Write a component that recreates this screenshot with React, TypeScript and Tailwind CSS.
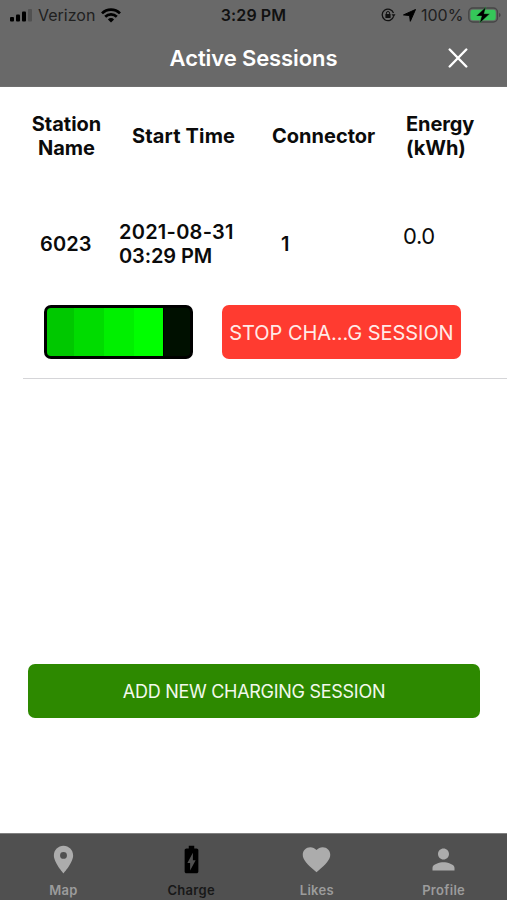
import { MdBatteryChargingFull, MdFavorite, MdLocationOn, MdPerson } from "react-icons/md";

const tabs = [
  { label: "Map", Icon: MdLocationOn, active: false },
  { label: "Charge", Icon: MdBatteryChargingFull, active: true },
  { label: "Likes", Icon: MdFavorite, active: false },
  { label: "Profile", Icon: MdPerson, active: false },
];

function SignalIcon() {
  return (
    <svg width="23" height="13" viewBox="0 0 23 13">
      <rect x="0" y="8" width="4" height="4.5" rx="1" />
      <rect x="6" y="5.5" width="4" height="7" rx="1" />
      <rect x="12" y="2.5" width="4" height="10" rx="1" />
      <rect x="18" y="0" width="4" height="12.5" rx="1" fill="#515151" />
    </svg>
  );
}

function WifiIcon() {
  return (
    <svg width="20" height="15" viewBox="0 0 20 15" fill="none" stroke="#000" strokeWidth="2.7">
      <path d="M1 5.4a12.7 12.7 0 0 1 18 0" />
      <path d="M4.2 8.7a8.2 8.2 0 0 1 11.6 0" />
      <path d="M10 14.5 6.9 11.4a4.4 4.4 0 0 1 6.2 0z" fill="#000" stroke="none" />
    </svg>
  );
}

function RotationLockIcon() {
  return (
    <svg width="15" height="14" viewBox="0 0 15 14" fill="none" stroke="#111" strokeWidth="1.3">
      <path d="M12.6 8.4A5.8 5.8 0 1 1 12.5 5" />
      <path d="M10.5 6.3h4L12.7 9z" fill="#111" stroke="none" />
      <rect x="4.4" y="6" width="5.2" height="4" rx=".6" fill="#111" stroke="none" />
      <path d="M5.4 6.4V5.1a1.6 1.6 0 0 1 3.2 0v1.3" strokeWidth="1" />
    </svg>
  );
}

function BatteryIcon() {
  return (
    <svg width="34" height="18" viewBox="0 0 34 18">
      <rect x=".8" y="2" width="28.6" height="14" rx="4" fill="none" stroke="#464646" strokeWidth="1.4" />
      <rect x="2.5" y="3.7" width="25.2" height="10.6" rx="2.3" fill="#35c759" />
      <path d="M31 7v4.2c1-.3 1.6-1 1.6-2.1S32 7.3 31 7z" fill="#464646" />
      <path d="M18 .8 8.2 10h5.4l-2 7.2 10.3-9.500h-5.800z" stroke="#35c759" strokeWidth=".4" />
    </svg>
  );
}

export default function App() {
  return (
    <div className="flex h-[900px] w-[507px] flex-col overflow-hidden bg-white font-['Inter',sans-serif] text-[#0b0b0b]">
      <header className="h-[87px] shrink-0 border-b border-[#707070] bg-[#696969]">
        <div className="grid h-[30px] grid-cols-[1fr_auto_1fr] items-center text-[16px]">
          <div className="flex items-center pl-[10px]">
            <SignalIcon />
            <span className="ml-[5px] w-[58px] text-[16px] text-[#202020]">Verizon</span>
            <span className="ml-[5px]"><WifiIcon /></span>
          </div>
          <span className="text-[16px] font-semibold tracking-[0.1px] text-[#111]">3:29 PM</span>
          <div className="flex items-center justify-end pr-[5px]">
            <RotationLockIcon />
            <svg className="ml-[7px]" width="13" height="13" viewBox="0 0 13 13">
              <path d="M12.5.5 7.3 12.3 6.6 6.5.5 5.9z" stroke="#000" strokeLinejoin="round" />
            </svg>
            <span className="ml-[5px] w-[43px] text-[16px] text-[#202020]">100%</span>
            <span className="ml-[4px]"><BatteryIcon /></span>
          </div>
        </div>
        <div className="grid h-[56px] grid-cols-[1fr_auto_1fr] items-center text-white">
          <span />
          <h1 className="text-[22px] font-semibold tracking-[-0.1px]">Active Sessions</h1>
          <button className="mr-[39px] justify-self-end" aria-label="Close">
            <svg width="20" height="20" viewBox="0 0 20 20" stroke="#fff" strokeWidth="2.4" strokeLinecap="round">
              <path d="m1.7 1.5 16.6 17M18.3 1.5 1.7 18.5" />
            </svg>
          </button>
        </div>
      </header>

      <main className="flex-1">
        <div className="grid h-[97px] grid-cols-[99px_122px_145px_1fr] items-center pl-[17px] text-[20px] leading-[24px] font-bold">
          <div className="text-center">Station<br />Name</div>
          <div className="pl-[16px] tracking-[0.15px] whitespace-nowrap">Start Time</div>
          <div className="pl-[34px] whitespace-nowrap">Connector</div>
          <div className="pl-[23px] tracking-[-0.1px]">Energy<br />(kWh)</div>
        </div>

        <section className="ml-[23px] h-[195px] border-b border-[#d5d5d8]">
          <div className="grid h-[121px] grid-cols-[96px_162px_122px_1fr] items-center pb-px text-[20px] leading-[24px] font-semibold">
            <div className="pl-[17px] tracking-[0.1px]">6023</div>
            <div className="tracking-[0.25px] whitespace-nowrap">2021-08-31<br /><span className="tracking-[-0.1px]">03:29 PM</span></div>
            <div>1</div>
            <div className="pb-[17px] text-[22px] font-normal tracking-[-0.4px]">0.0</div>
          </div>
          <div className="flex pl-[21px]">
            <div className="flex h-[54px] w-[149px] overflow-hidden rounded-[7px] border-3 border-black bg-[#001000]">
              <div className="w-[27px] bg-[#00c800]" />
              <div className="w-[30px] bg-[#00dc00]" />
              <div className="w-[30px] bg-[#00f000]" />
              <div className="w-[29px] bg-[#00ff00]" />
              <div className="w-px bg-black" />
            </div>
            <button className="ml-[29px] h-[54px] w-[239px] rounded-[7px] bg-[#ff3b30] pt-px text-[20px] tracking-[-0.05px] whitespace-nowrap text-[#ffeae7]">
              STOP CHA...G SESSION
            </button>
          </div>
        </section>

        <button className="mt-[285px] ml-[28px] h-[54px] w-[452px] rounded-[7px] bg-[#2d8900] text-[18px] tracking-[-0.28px] text-[#f2f9ec]">
          ADD NEW CHARGING SESSION
        </button>
      </main>

      <nav className="flex h-[67px] shrink-0 border-t border-[#808080] bg-[#505050]">
        {tabs.map(({ label, Icon, active }) => (
          <div
            key={label}
            className={
              active
                ? "flex w-[126.75px] flex-col items-center pt-[9px] pl-[2px] text-black"
                : "flex w-[126.75px] flex-col items-center pt-[9px] text-[#acacac]"
            }
          >
            <Icon size={33} />
            <span
              className={
                active
                  ? "mt-[5px] text-[13px] leading-[18px] font-semibold tracking-[0.3px] text-[#181818]"
                  : "mt-[5px] text-[13px] leading-[18px] font-semibold tracking-[0.3px] text-[#9c9c9c]"
              }
            >
              {label}
            </span>
          </div>
        ))}
      </nav>
    </div>
  );
}
